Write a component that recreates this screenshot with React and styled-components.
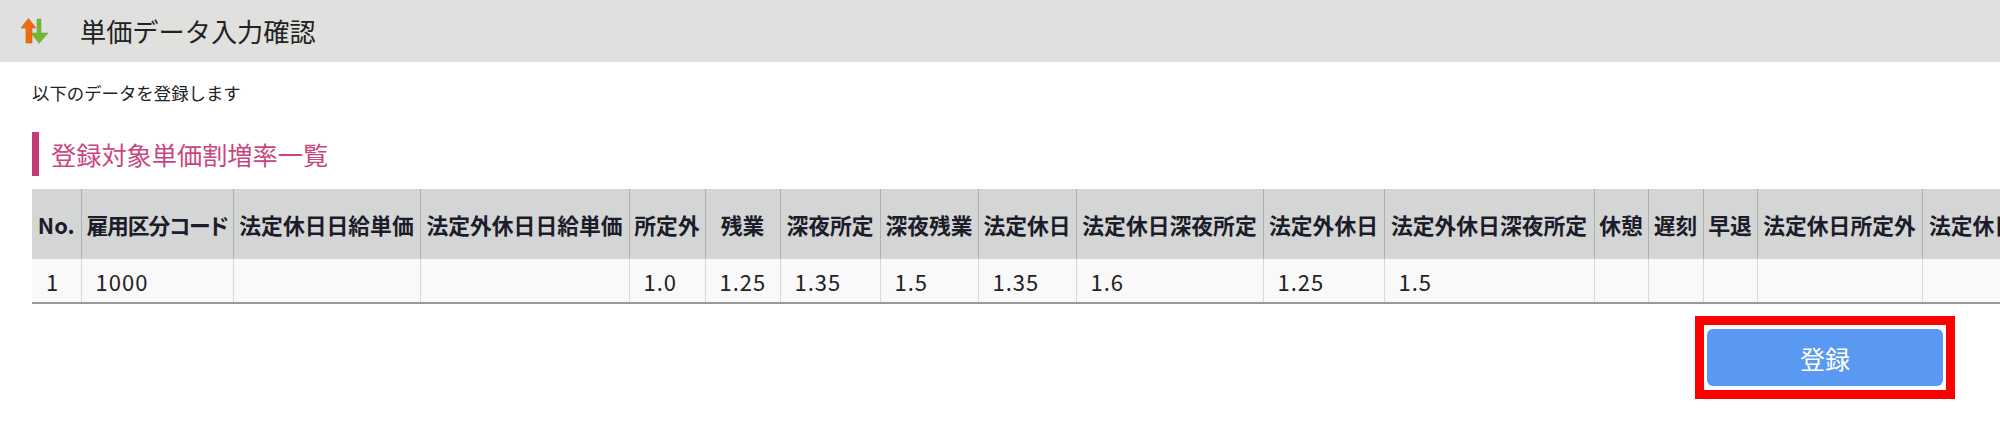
import React from 'react';
import styled, { createGlobalStyle } from 'styled-components';

const GlobalStyle = createGlobalStyle`
  html, body {
    margin: 0;
    padding: 0;
    background: #fff;
    overflow: hidden;
    font-family: "Noto Sans CJK JP", "Noto Sans", sans-serif;
    color: #222;
  }
`;

const columns = [
  { label: 'No.', width: 49, value: '1' },
  { label: '雇用区分コード', width: 152, value: '1000', tight: true },
  { label: '法定休日日給単価', width: 187 },
  { label: '法定外休日日給単価', width: 209 },
  { label: '所定外', width: 76, value: '1.0' },
  { label: '残業', width: 75, value: '1.25' },
  { label: '深夜所定', width: 100, value: '1.35' },
  { label: '深夜残業', width: 98, value: '1.5' },
  { label: '法定休日', width: 98, value: '1.35' },
  { label: '法定休日深夜所定', width: 187, value: '1.6' },
  { label: '法定外休日', width: 121, value: '1.25' },
  { label: '法定外休日深夜所定', width: 210, value: '1.5' },
  { label: '休憩', width: 54 },
  { label: '遅刻', width: 55 },
  { label: '早退', width: 54 },
  { label: '法定休日所定外', width: 165 },
  { label: '法定休日深夜所定外', width: 210 },
];

const Page = styled.div`
  width: 2000px;
  height: 448px;
  overflow: hidden;
`;

const TitleBar = styled.header`
  display: flex;
  align-items: center;
  height: 62px;
  padding-left: 20px;
  gap: 31px;
  background: #e0e0de;
`;

const Title = styled.h1`
  margin: 0;
  font-size: 26.2px;
  font-weight: 400;
  line-height: 1;
  color: #222;
`;

const Content = styled.main`
  padding-left: 32px;
`;

const Lead = styled.p`
  margin: 0;
  padding-top: 19px;
  font-size: 17.4px;
  line-height: 24px;
  color: #222;
`;

const SectionTitle = styled.h2`
  display: flex;
  align-items: center;
  height: 44px;
  margin: 27px 0 13px;
  padding-left: 12px;
  border-left: 7px solid #c23c74;
  font-size: 25.2px;
  font-weight: 400;
  color: #c9457f;
`;

const TableWrap = styled.div`
  overflow: hidden;
`;

const Table = styled.table`
  table-layout: fixed;
  width: 2013px;
  border-collapse: collapse;
  border-bottom: 2px solid #999;
`;

const HeadCell = styled.th`
  height: 70px;
  padding: 0 2px;
  background: #d4d6d5;
  border-right: 1px solid #aeb0af;
  font-size: 21.8px;
  font-weight: 700;
  font-feature-settings: "palt";
  letter-spacing: ${(p) => (p.$tight ? '-1.1px' : '0')};
  text-align: center;
  white-space: nowrap;
  color: #1c1c2a;
`;

const BodyCell = styled.td`
  height: 43px;
  padding: 0 0 0 14px;
  background: #f9f9f9;
  border-right: 1px solid #d8d8d8;
  font-size: 22px;
  letter-spacing: 1px;
  line-height: 1;
  color: #222;
`;

const Actions = styled.div`
  display: flex;
  justify-content: flex-end;
  padding: 12px 45px 0 0;
`;

const Highlight = styled.div`
  border: 9px solid #f00;
  padding: 4px 3px;
`;

const SubmitButton = styled.button`
  display: block;
  width: 236px;
  height: 57px;
  padding: 0;
  border: 0;
  border-radius: 6px;
  background: #5999f1;
  color: #fff;
  font-family: inherit;
  font-size: 25px;
  cursor: pointer;
`;

const SortIcon = () => (
  <svg width="29" height="26" viewBox="0 0 29 26" aria-hidden="true">
    <path d="M17 1 L21 1 L21 15 L28 15 L19 25.5 L11 15 L17 15 Z" fill="#6fb92c" stroke="#7fa35c" strokeWidth="0.6" />
    <path
      d="M8.5 0.5 L16 10 L12 10 L12 25 L6 25 L6 10 L1 10 Z"
      fill="#f26a10"
      stroke="#b8621f"
      strokeWidth="0.6"
    />
  </svg>
);

const App = () => (
  <Page>
    <GlobalStyle />
    <TitleBar>
      <SortIcon />
      <Title>単価データ入力確認</Title>
    </TitleBar>
    <Content>
      <Lead>以下のデータを登録します</Lead>
      <SectionTitle>登録対象単価割増率一覧</SectionTitle>
      <TableWrap>
        <Table>
          <colgroup>
            {columns.map((col) => (
              <col key={col.label} style={{ width: col.width }} />
            ))}
          </colgroup>
          <thead>
            <tr>
              {columns.map((col) => (
                <HeadCell key={col.label} $tight={col.tight}>{col.label}</HeadCell>
              ))}
            </tr>
          </thead>
          <tbody>
            <tr>
              {columns.map((col) => (
                <BodyCell key={col.label}>{col.value}</BodyCell>
              ))}
            </tr>
          </tbody>
        </Table>
      </TableWrap>
      <Actions>
        <Highlight>
          <SubmitButton type="button">登録</SubmitButton>
        </Highlight>
      </Actions>
    </Content>
  </Page>
);

export default App;
